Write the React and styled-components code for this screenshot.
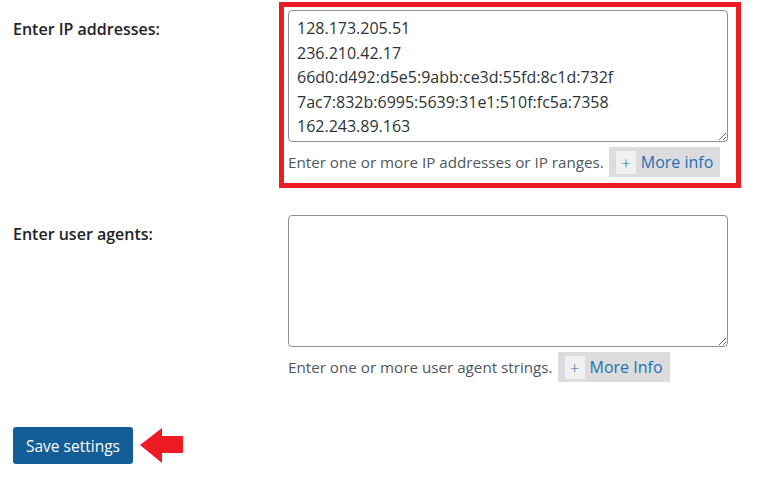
import React from 'react'
import styled, { createGlobalStyle } from 'styled-components'

const GlobalStyle = createGlobalStyle`
  body {
    margin: 0;
    background: #fff;
    font-family: "Open Sans", "Noto Sans", sans-serif;
    color: #1d2327;
  }
`

const Page = styled.form`
  padding: 2px 0 0 13px;
`

const Row = styled.div`
  display: grid;
  grid-template-columns: 266px 462px;
  margin-bottom: ${p => p.gap || 0}px;
`

const Label = styled.label`
  padding-top: 16px;
  font-size: 16px;
  font-weight: 600;
  line-height: 22px;
  color: #1d2327;
`

const Field = styled.div`
  border: 5px solid ${p => (p.highlighted ? '#ed1c24' : 'transparent')};
  padding: 3px 8px 6px 4px;
`

const TextArea = styled.textarea`
  display: block;
  box-sizing: border-box;
  width: 440px;
  height: 132px;
  margin: 0;
  padding: 5px 8px;
  border: 1px solid #8c8f94;
  border-radius: 4px;
  font-family: inherit;
  font-size: 16px;
  line-height: 24.6px;
  color: #2c3338;
  overflow: hidden;
  resize: vertical;
`

const Description = styled.p`
  display: flex;
  align-items: center;
  gap: 5px;
  margin: 5px 0 0;
  font-size: 15.2px;
  color: #50575e;
`

const InfoButton = styled.button`
  display: flex;
  align-items: center;
  gap: 5px;
  height: 30px;
  padding: 0 7px;
  border: 0;
  background: #dcdcde;
  font-family: inherit;
  font-size: 16px;
  color: #2271b1;
  cursor: pointer;
`

const Plus = styled.span`
  display: flex;
  align-items: center;
  justify-content: center;
  width: 20px;
  height: 23px;
  background: #f0f0f1;
  font-size: 17px;
  font-weight: 300;
`

const Actions = styled.div`
  display: flex;
  align-items: center;
  gap: 7px;
`

const SaveButton = styled.button`
  height: 37px;
  padding: 0 13px;
  border: 0;
  border-radius: 3px;
  background: #135e96;
  font-family: inherit;
  font-size: 15.5px;
  color: #fff;
  cursor: pointer;
`

const ArrowLeft = () => (
  <svg width="43" height="35" viewBox="0 0 43 35">
    <polygon points="0,17 22,0 22,8 43,8 43,25 22,25 22,35" fill="#ed1c24" />
  </svg>
)

const ips = [
  '128.173.205.51',
  '236.210.42.17',
  '66d0:d492:d5e5:9abb:ce3d:55fd:8c1d:732f',
  '7ac7:832b:6995:5639:31e1:510f:fc5a:7358',
  '162.243.89.163',
].join('\n')

const MoreInfo = ({ children }) => (
  <InfoButton type="button">
    <Plus>+</Plus>
    {children}
  </InfoButton>
)

const App = () => (
  <>
    <GlobalStyle />
    <Page onSubmit={e => e.preventDefault()}>
      <Row gap={19}>
        <Label htmlFor="ips">Enter IP addresses:</Label>
        <Field highlighted>
          <TextArea id="ips" defaultValue={ips} />
          <Description>
            Enter one or more IP addresses or IP ranges.
            <MoreInfo>More info</MoreInfo>
          </Description>
        </Field>
      </Row>

      <Row gap={34}>
        <Label htmlFor="agents">Enter user agents:</Label>
        <Field>
          <TextArea id="agents" />
          <Description>
            Enter one or more user agent strings.
            <MoreInfo>More Info</MoreInfo>
          </Description>
        </Field>
      </Row>

      <Actions>
        <SaveButton type="submit">Save settings</SaveButton>
        <ArrowLeft />
      </Actions>
    </Page>
  </>
)

export default App
